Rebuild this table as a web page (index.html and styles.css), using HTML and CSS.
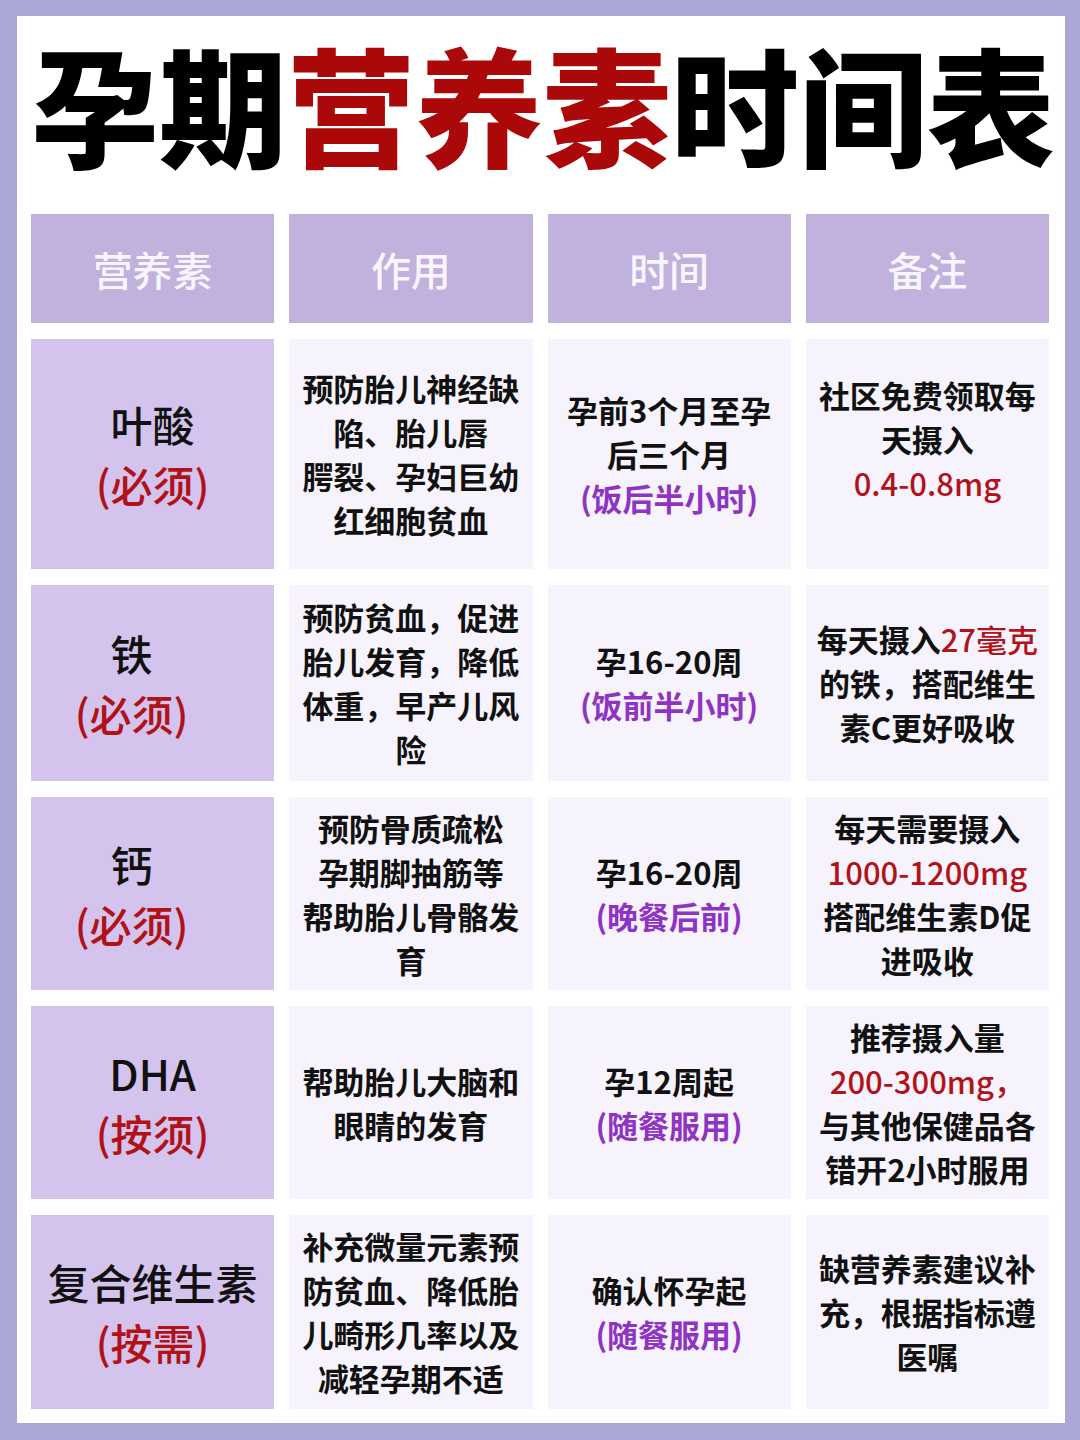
FILE: index.html
```html
<!DOCTYPE html>
<html lang="zh-CN">
<head>
<meta charset="utf-8">
<title>孕期营养素时间表</title>
<link rel="stylesheet" href="styles.css">
</head>
<body>
<div class="panel">
  <h1 class="title">孕期<span class="red">营养素</span>时间表</h1>
  <div class="table">
    <div class="cell head"><div class="txt">营养素</div></div>
    <div class="cell head"><div class="txt">作用</div></div>
    <div class="cell head"><div class="txt">时间</div></div>
    <div class="cell head"><div class="txt">备注</div></div>

    <div class="cell name"><div class="txt">叶酸<br><span class="must">(必须)</span></div></div>
    <div class="cell body"><div class="txt">预防胎儿神经缺<br>陷、胎儿唇<br>腭裂、孕妇巨幼<br>红细胞贫血</div></div>
    <div class="cell body"><div class="txt">孕前3个月至孕<br>后三个月<br><span class="purple">(饭后半小时)</span></div></div>
    <div class="cell body raise"><div class="txt">社区免费领取每<br>天摄入<br><span class="num">0.4-0.8mg</span></div></div>

    <div class="cell name shift"><div class="txt">铁<br><span class="must">(必须)</span></div></div>
    <div class="cell body"><div class="txt">预防贫血，促进<br>胎儿发育，降低<br>体重，早产儿风<br>险</div></div>
    <div class="cell body"><div class="txt">孕16-20周<br><span class="purple">(饭前半小时)</span></div></div>
    <div class="cell body"><div class="txt">每天摄入<span class="num">27毫克</span><br>的铁，搭配维生<br>素C更好吸收</div></div>

    <div class="cell name shift"><div class="txt">钙<br><span class="must">(必须)</span></div></div>
    <div class="cell body"><div class="txt">预防骨质疏松<br>孕期脚抽筋等<br>帮助胎儿骨骼发<br>育</div></div>
    <div class="cell body"><div class="txt">孕16-20周<br><span class="purple">(晚餐后前)</span></div></div>
    <div class="cell body"><div class="txt">每天需要摄入<br><span class="num">1000-1200mg</span><br>搭配维生素D促<br>进吸收</div></div>

    <div class="cell name"><div class="txt">DHA<br><span class="must">(按须)</span></div></div>
    <div class="cell body"><div class="txt">帮助胎儿大脑和<br>眼睛的发育</div></div>
    <div class="cell body"><div class="txt">孕12周起<br><span class="purple">(随餐服用)</span></div></div>
    <div class="cell body"><div class="txt">推荐摄入量<br><span class="num">200-300mg，</span><br>与其他保健品各<br>错开2小时服用</div></div>

    <div class="cell name"><div class="txt">复合维生素<br><span class="must">(按需)</span></div></div>
    <div class="cell body"><div class="txt">补充微量元素预<br>防贫血、降低胎<br>儿畸形几率以及<br>减轻孕期不适</div></div>
    <div class="cell body"><div class="txt">确认怀孕起<br><span class="purple">(随餐服用)</span></div></div>
    <div class="cell body"><div class="txt">缺营养素建议补<br>充，根据指标遵<br>医嘱</div></div>
  </div>
</div>
</body>
</html>
```

FILE: styles.css
```css
* { box-sizing: border-box; }

html, body {
  margin: 0;
  padding: 0;
}

body {
  background: #aba8d7;
  width: 1080px;
  height: 1440px;
  padding: 16px 15px 17px 17px;
  font-family: "Noto Sans CJK SC", "Noto Sans", sans-serif;
}

.panel {
  background: #ffffff;
  width: 1048px;
  height: 1407px;
  padding: 23px 16px 14px 14px;
}

.title {
  margin: 0;
  height: 175px;
  font-size: 128px;
  line-height: 128px;
  font-weight: 900;
  color: #000;
  text-align: center;
  white-space: nowrap;
  letter-spacing: 0;
}

.title .red { color: #ab0909; }

.table {
  display: grid;
  grid-template-columns: repeat(4, minmax(0, 1fr));
  grid-template-rows: 109px 230px 196px 193px 193px 194px;
  column-gap: 15px;
  row-gap: 16px;
}

.cell {
  display: flex;
  align-items: center;
  justify-content: center;
  text-align: center;
  white-space: nowrap;
  min-width: 0;
}

.head {
  background: #c1b1dd;
  color: #f9f5fd;
  font-size: 40px;
  font-weight: 500;
}

.name {
  background: #d3c3ed;
  color: #111;
  font-size: 42px;
  line-height: 60px;
  font-weight: 500;
}

.name.shift { padding-right: 42px; }

.must { color: #b01218; }

.body {
  background: #f6f3fc;
  color: #111;
  font-size: 31px;
  line-height: 44px;
  font-weight: 700;
}

.body.raise { padding-bottom: 30px; }

.purple { color: #8f33c2; font-weight: 700; }

.num { color: #b2121a; font-weight: 500; }
```
